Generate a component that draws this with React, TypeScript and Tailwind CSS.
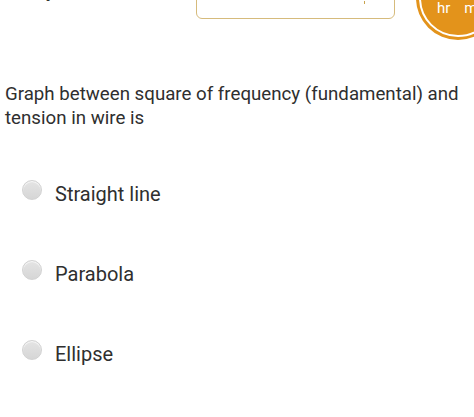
import React from 'react';

const options = ['Straight line', 'Parabola', 'Ellipse'];

export default function App() {
  return (
    <div className="w-[474px] h-[417px] bg-white overflow-hidden font-['Roboto',sans-serif] text-[#2f2f2f]">
      {/* Header (cut off at top) */}
      <div className="flex h-[42px] overflow-hidden">
        <div className="ml-[5px] mt-[-27px] text-[30px] leading-[32px] font-medium text-[#333] w-[191px] shrink-0">20 / 40</div>
        <div className="relative mt-[-41px] w-[199px] h-[60px] shrink-0 rounded-[6px] border-[1.5px] border-[#d6bb7c] bg-white">
          <div className="absolute right-[29px] top-[41px] w-[1.5px] h-[3px] bg-[#c9a34e]"></div>
        </div>
        <div className="ml-[21px] mt-[-44px] w-[84px] h-[84px] shrink-0 rounded-full bg-[#e3931b] p-[3px]">
          <div className="w-full h-full rounded-full border-2 border-white flex items-end justify-start pl-[16px] pb-[19px] text-white text-[15px] leading-[16px]">
            <span>hr</span>
            <span className="ml-[14px]">m</span>
          </div>
        </div>
      </div>

      {/* Question */}
      <p className="mt-[40px] pl-[5px] pr-[4px] text-[18.7px] leading-[24px] text-[#2f2f2f]">
        Graph between square of frequency (fundamental) and tension in wire is
      </p>

      {/* Options */}
      <div className="mt-[52px] flex flex-col">
        {options.map((o) => (
          <div key={o} className="flex items-start h-[80px]">
            <div className="ml-[22px] mt-[-2px] w-[20px] h-[20px] rounded-full border border-[#d2d2d2] bg-gradient-to-b from-[#e4e4e4] to-[#d6d6d6] shadow-[inset_0_1px_1px_rgba(255,255,255,0.8)]"></div>
            <span className="ml-[13px] text-[20px] leading-[24px] text-[#2f2f2f]">{o}</span>
          </div>
        ))}
      </div>
    </div>
  );
}
